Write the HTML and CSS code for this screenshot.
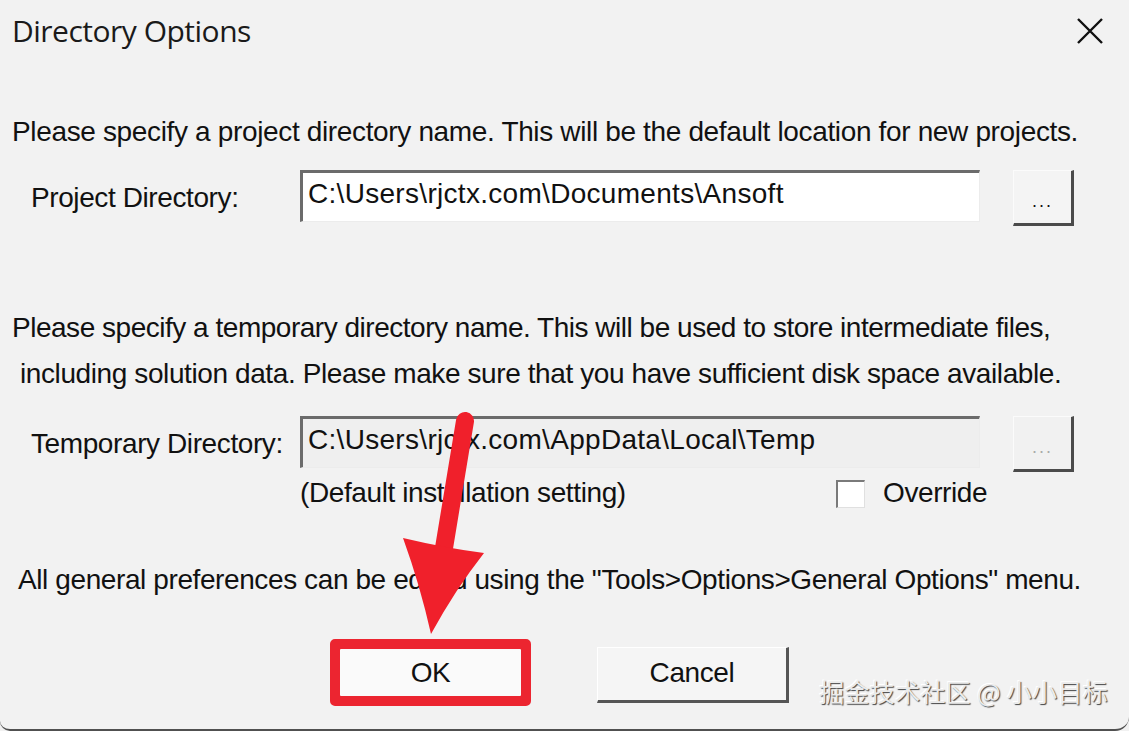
FILE: index.html
```html
<!DOCTYPE html>
<html>
<head>
<meta charset="utf-8">
<link rel="stylesheet" href="styles.css">
</head>
<body>
<div class="dialog">
  <div class="titlebar">
    <span class="title">Directory Options</span>
    <svg class="close" width="28" height="28" viewBox="0 0 28 28"><path d="M2 2 L26 26 M26 2 L2 26" stroke="#111" stroke-width="2.4" fill="none"/></svg>
  </div>

  <p class="line l1">Please specify a project directory name. This will be the default location for new projects.</p>
  <div class="field-row r1">
    <span class="label">Project Directory:</span>
    <div class="input">C:\Users\rjctx.com\Documents\Ansoft</div>
    <div class="browse">...</div>
  </div>

  <p class="line l2">Please specify a temporary directory name. This will be used to store intermediate files,</p>
  <p class="line l3">including solution data. Please make sure that you have sufficient disk space available.</p>
  <div class="field-row r2">
    <span class="label">Temporary Directory:</span>
    <div class="input disabled">C:\Users\rjctx.com\AppData\Local\Temp</div>
    <div class="browse disabled">...</div>
  </div>
  <div class="default-row">
    <span class="default-text">(Default installation setting)</span>
    <span class="check"></span>
    <span class="override">Override</span>
  </div>

  <p class="line l4">All general preferences can be edited using the "Tools&gt;Options&gt;General Options" menu.</p>

  <div class="buttons">
    <div class="highlight"><div class="btn ok">OK</div></div>
    <div class="btn cancel">Cancel</div>
  </div>

  <div class="watermark">掘金技术社区 @ 小小目标</div>

  <svg class="arrow" width="1129" height="731" viewBox="0 0 1129 731">
    <path d="M465 421 L444 548" stroke="#f0202b" stroke-width="18" stroke-linecap="round" fill="none"/>
    <path d="M403 538 Q445 548 484 553 Q455 590 431 634 Q420 585 403 538 Z" fill="#f0202b"/>
  </svg>
</div>
</body>
</html>
```

FILE: styles.css
```css
html, body {
  margin: 0;
  padding: 0;
}
body {
  width: 1129px;
  height: 731px;
  overflow: hidden;
  background: #f1f1f1;
}
.dialog {
  position: relative;
  width: 1129px;
  height: 729px;
  background: #f2f2f2;
  border-bottom: 2px solid #505050;
  border-bottom-left-radius: 10px;
  border-bottom-right-radius: 14px;
  font-family: "Liberation Sans", Arial, sans-serif;
  font-size: 28px;
  letter-spacing: -0.4px;
  color: #111;
  display: flex;
  flex-direction: column;
}
.titlebar {
  height: 60px;
  display: flex;
  align-items: center;
  justify-content: space-between;
  padding: 0 25px 0 12px;
}
.title {
  font-family: "Open Sans", "Noto Sans", sans-serif;
  font-size: 30px;
  color: #1a1a1a;
  letter-spacing: -0.5px;
}
.close {
  display: block;
  margin-top: 2px;
}
.line {
  margin: 0;
  height: 30px;
  line-height: 30px;
  white-space: nowrap;
}
.l1 { margin-top: 57px; padding-left: 12px; letter-spacing: -0.35px; }
.l2 { margin-top: 87px; padding-left: 12px; letter-spacing: -0.48px; }
.l3 { margin-top: 16px; padding-left: 20px; }
.l4 { margin-top: 57px; padding-left: 18px; }

.field-row {
  display: flex;
  align-items: flex-start;
  height: 56px;
  padding-left: 31px;
}
.r1 { margin-top: 23px; }
.r2 { margin-top: 27px; }
.label {
  flex: 0 0 269px;
  line-height: 56px;
  height: 56px;
  white-space: nowrap;
}
.input {
  box-sizing: border-box;
  width: 680px;
  height: 52px;
  background: #fff;
  border-top: 3px solid #6b6b6b;
  border-left: 3px solid #6b6b6b;
  border-right: 1px solid #ececec;
  border-bottom: 1px solid #ececec;
  padding: 4px 0 0 5px;
  line-height: 34px;
  letter-spacing: 0.3px;
  white-space: nowrap;
  overflow: hidden;
}
.input.disabled {
  background: #efefef;
}
.browse {
  box-sizing: border-box;
  margin-left: 33px;
  width: 61px;
  height: 56px;
  background: #f4f4f4;
  border-top: 1px solid #fbfbfb;
  border-left: 1px solid #fbfbfb;
  border-right: 3px solid #4b4b4b;
  border-bottom: 3px solid #4b4b4b;
  text-align: center;
  font-size: 18px;
  line-height: 60px;
  letter-spacing: 2px;
  color: #111;
}
.browse.disabled {
  color: #aaa;
  background: #f1f1f1;
}
.default-row {
  margin-top: 6px;
  height: 30px;
  display: flex;
  align-items: center;
  padding-left: 300px;
}
.default-text {
  flex: 0 0 536px;
  line-height: 30px;
  white-space: nowrap;
}
.check {
  box-sizing: border-box;
  width: 29px;
  height: 28px;
  background: #fff;
  border-top: 2px solid #7a7a7a;
  border-left: 2px solid #7a7a7a;
  border-right: 1px solid #e0e0e0;
  border-bottom: 1px solid #e0e0e0;
  margin-top: 2px;
}
.override {
  margin-left: 18px;
  line-height: 30px;
}
.buttons {
  margin-top: 44px;
  display: flex;
  align-items: flex-start;
  padding-left: 330px;
}
.highlight {
  box-sizing: border-box;
  width: 201px;
  height: 67px;
  border: 10px solid #ec2530;
  border-radius: 5px;
  background: #ec2530;
}
.btn {
  box-sizing: border-box;
  text-align: center;
}
.ok {
  width: 181px;
  height: 47px;
  background: #fafafa;
  line-height: 47px;
  border-radius: 1px;
}
.cancel {
  margin-left: 66px;
  margin-top: 8px;
  width: 192px;
  height: 56px;
  background: #f5f5f5;
  border-right: 3px solid #555;
  border-bottom: 3px solid #555;
  border-top: 1px solid #fff;
  border-left: 1px solid #fff;
  line-height: 50px;
}
.watermark {
  position: absolute;
  right: 21px;
  bottom: 20px;
  font-family: "Noto Sans CJK SC", sans-serif;
  font-size: 25px;
  letter-spacing: 0.3px;
  color: #ebebeb;
  text-shadow: 1px 1px 1px #444, -1px -1px 0 #fff;
}
.arrow {
  position: absolute;
  left: 0;
  top: 0;
  pointer-events: none;
}
```
